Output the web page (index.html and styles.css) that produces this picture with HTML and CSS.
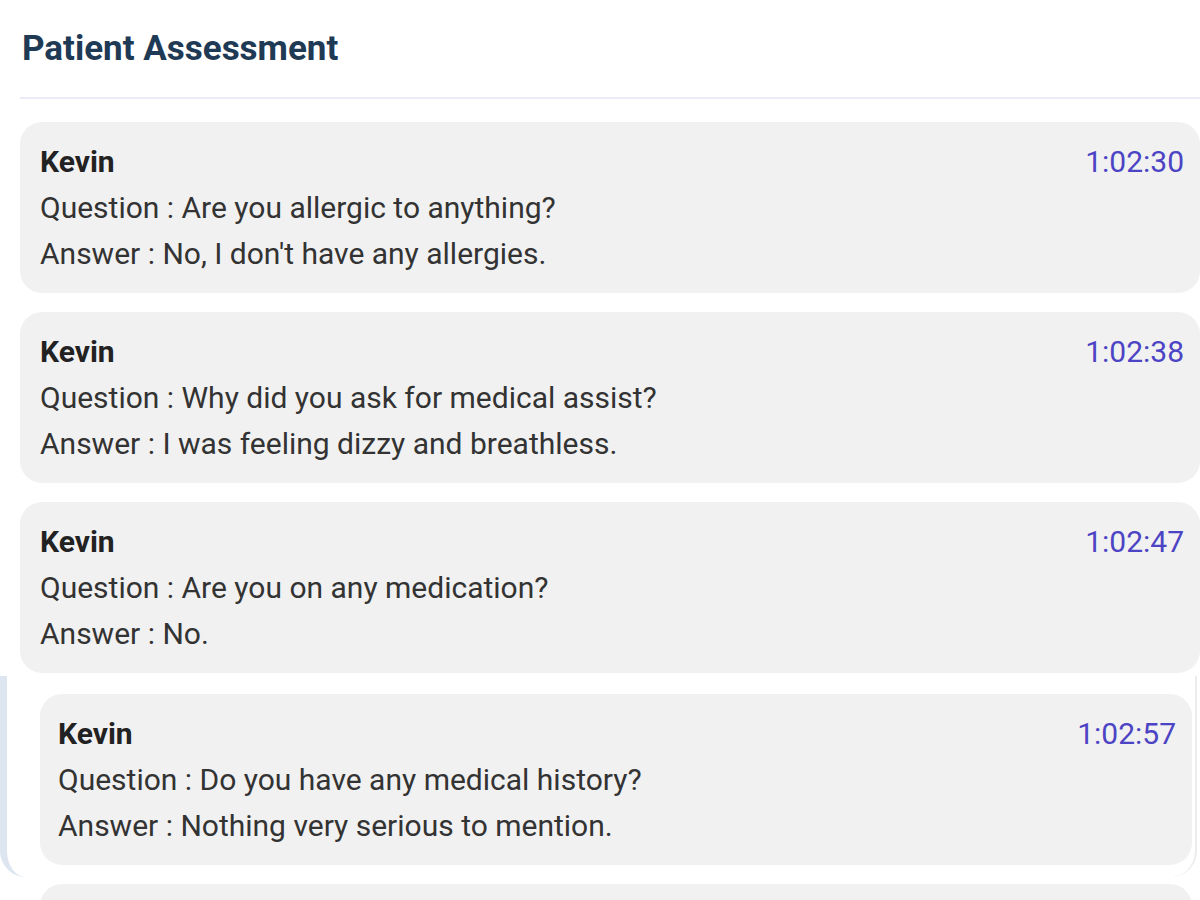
FILE: index.html
```html
<!DOCTYPE html>
<html>
<head>
	<title>Patient Assessment</title>
	<link rel="stylesheet" href="styles.css">
</head>
<body>
	<div class="panel">
		<h1 class="title">Patient Assessment</h1>
		<div class="list">
			<div class="entry">
				<div class="entry-head">
					<span class="who">Kevin</span>
					<span class="time">1:02:30</span>
				</div>
				<p class="line">Question : Are you allergic to anything?</p>
				<p class="line">Answer : No, I don't have any allergies.</p>
			</div>
			<div class="entry">
				<div class="entry-head">
					<span class="who">Kevin</span>
					<span class="time">1:02:38</span>
				</div>
				<p class="line">Question : Why did you ask for medical assist?</p>
				<p class="line">Answer : I was feeling dizzy and breathless.</p>
			</div>
			<div class="entry">
				<div class="entry-head">
					<span class="who">Kevin</span>
					<span class="time">1:02:47</span>
				</div>
				<p class="line">Question : Are you on any medication?</p>
				<p class="line">Answer : No.</p>
			</div>
		</div>
	</div>
	<div class="frame">
		<div class="entry entry-inner">
			<div class="entry-head">
				<span class="who">Kevin</span>
				<span class="time">1:02:57</span>
			</div>
			<p class="line">Question : Do you have any medical history?</p>
			<p class="line">Answer : Nothing very serious to mention.</p>
		</div>
	</div>
	<div class="entry entry-next"></div>
</body>
</html>
```
FILE: styles.css
```css
html {
	font-family: Roboto, "Liberation Sans", Arial, sans-serif;
}
body {
	margin: 0;
	background: #ffffff;
	overflow: hidden;
}
.panel {
	padding-left: 20px;
}
.title {
	margin: 0;
	padding: 28px 0 0 2px;
	height: 99px;
	box-sizing: border-box;
	font-size: 35px;
	line-height: 42px;
	font-weight: 700;
	color: #1f3a55;
	border-bottom: 2px solid #ecebfa;
}
.list {
	display: flex;
	flex-direction: column;
	gap: 19px;
	padding-top: 23px;
}
.entry {
	background: #f1f1f1;
	border-radius: 22px;
	padding: 17px 16px 16px 20px;
	font-size: 30px;
	line-height: 46px;
	color: #333333;
}
.entry-head {
	display: flex;
	justify-content: space-between;
}
.who {
	font-weight: 700;
	color: #222222;
}
.time {
	color: #4c44c4;
}
.line {
	margin: 0;
}
.frame {
	margin: 3px 3px 0 0;
	padding: 18px 3px 12px 33px;
	border-left: 7px solid #dde6f0;
	border-right: 2px solid #ececec;
	border-radius: 0 0 26px 26px;
}
.entry-inner {
	padding-left: 18px;
}
.entry-next {
	margin: 7px 8px 0 40px;
	height: 60px;
	padding: 0;
}
```
